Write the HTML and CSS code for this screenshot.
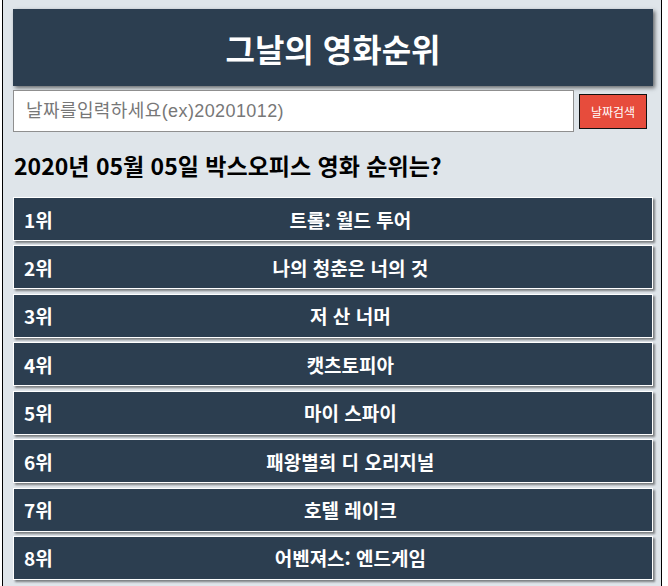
FILE: index.html
```html
<!DOCTYPE html>
<html lang="ko">
<head>
<meta charset="utf-8">
<title>그날의 영화순위</title>
<link rel="stylesheet" href="styles.css">
</head>
<body>
<div class="page">
  <header class="title-bar">
    <h1 class="title">그날의 영화순위</h1>
  </header>
  <div class="search">
    <input class="search-input" type="text" placeholder="날짜를입력하세요(ex)20201012)">
    <button class="search-btn" type="button">날짜검색</button>
  </div>
  <h2 class="result-title">2020년 05월 05일 박스오피스 영화 순위는?</h2>
  <ul class="rank-list">
    <li class="rank-item"><span class="rank-no">1위</span><span class="rank-name">트롤: 월드 투어</span></li>
    <li class="rank-item"><span class="rank-no">2위</span><span class="rank-name">나의 청춘은 너의 것</span></li>
    <li class="rank-item"><span class="rank-no">3위</span><span class="rank-name">저 산 너머</span></li>
    <li class="rank-item"><span class="rank-no">4위</span><span class="rank-name">캣츠토피아</span></li>
    <li class="rank-item"><span class="rank-no">5위</span><span class="rank-name">마이 스파이</span></li>
    <li class="rank-item"><span class="rank-no">6위</span><span class="rank-name">패왕별희 디 오리지널</span></li>
    <li class="rank-item"><span class="rank-no">7위</span><span class="rank-name">호텔 레이크</span></li>
    <li class="rank-item"><span class="rank-no">8위</span><span class="rank-name">어벤져스: 엔드게임</span></li>
  </ul>
</div>
</body>
</html>
```
FILE: styles.css
```css
html, body {
  margin: 0;
  padding: 0;
  background: #ffffff;
}

body {
  font-family: "Noto Sans CJK KR", "Noto Sans", sans-serif;
  overflow: hidden;
}

.page {
  margin-left: 2px;
  width: 640px;
  min-height: 600px;
  padding: 9px 8px 0 10px;
  background: #dfe5ea;
  border-left: 1px solid #000;
  border-right: 1px solid #000;
}

.title-bar {
  height: 77px;
  background: #2c3e50;
  box-shadow: 2px 2px 4px rgba(0, 0, 0, 0.55);
  display: flex;
  align-items: center;
  justify-content: center;
  margin-bottom: 4px;
}

.title {
  margin: 0;
  color: #ffffff;
  font-size: 32px;
  font-weight: 700;
  line-height: 1;
}

.search {
  display: flex;
  align-items: center;
  gap: 5px;
}

.search-input {
  box-sizing: border-box;
  width: 561px;
  height: 42px;
  margin: 0;
  padding: 0 12px;
  border: 1px solid #8f8f8f;
  background: #fff;
  font-family: "Liberation Sans", "Noto Sans CJK KR", sans-serif;
  font-size: 18px;
  letter-spacing: 0.4px;
  color: #333;
}

.search-input::placeholder {
  color: #777;
}

.search-btn {
  box-sizing: border-box;
  width: 68px;
  height: 35px;
  margin: 0;
  padding: 0;
  border: 1px solid #111;
  background: #e74c3c;
  color: #fff;
  font-family: "Noto Sans CJK KR", sans-serif;
  font-size: 12px;
}

.result-title {
  margin: 0;
  padding-top: 19px;
  margin-bottom: 18px;
  line-height: 28px;
  font-size: 23px;
  font-weight: 700;
  color: #000;
  padding-left: 1px;
}

.rank-list {
  list-style: none;
  margin: 0;
  padding: 0;
}

.rank-item {
  box-sizing: border-box;
  height: 44px;
  margin-bottom: 4.43px;
  background: #2c3e50;
  border: 1px solid #ffffff;
  box-shadow: 2px 2px 2px rgba(0, 0, 0, 0.45);
  display: flex;
  align-items: center;
  color: #fff;
  font-weight: 700;
  font-size: 19px;
}

.rank-no {
  padding-left: 10px;
}

.rank-name {
  flex: 1;
  text-align: center;
  padding-right: 4px;
}
```
